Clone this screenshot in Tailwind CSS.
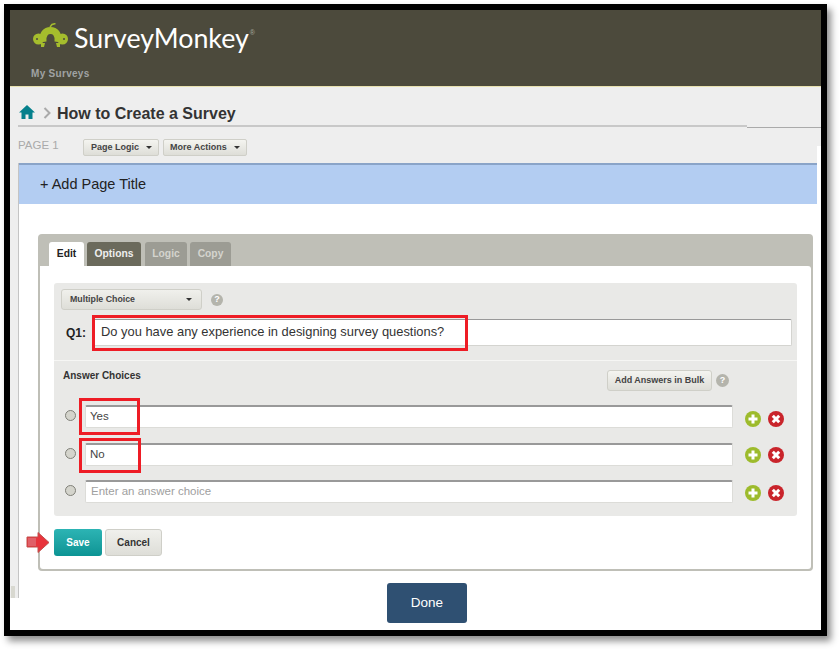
<!DOCTYPE html>
<html><head><meta charset="utf-8"><script src="https://cdn.jsdelivr.net/npm/@tailwindcss/browser@4"></script></head>
<body class="bg-white m-0">
<div class="w-[840px] h-[649px] overflow-hidden relative bg-white font-['Liberation_Sans',sans-serif]">
<div class="absolute left-[4px] top-[4px] w-[823px] h-[632px] border-[6px] border-black bg-white shadow-[4px_5px_7px_rgba(0,0,0,0.45)] flex flex-col">
  <!-- header -->
  <header class="h-[77px] shrink-0 bg-[#4c4a3c] border-b border-[#e8e2b0] pl-[21px] pt-[13px] flex flex-col">
    <div class="flex items-center h-[30px]">
      <svg width="35" height="24" viewBox="0 0 35 24" class="ml-[2px] mr-[6px] mb-[6px]">
        <path d="M17 4 L19 1.5 L22.5 0.5" fill="none" stroke="#a5bd2d" stroke-width="1.5"/>
        <path d="M10 19 C9 11 13 7.5 17.5 7.5 C22 7.5 26 11 25 19" fill="none" stroke="#a5bd2d" stroke-width="7"/>
        <circle cx="5.5" cy="16" r="5.5" fill="#a5bd2d"/><circle cx="29.5" cy="16" r="5.5" fill="#a5bd2d"/>
        <path d="M8 20 L12 20 L11 24 L8 24 Z M23 20 L27 20 L27 24 L24 24 Z" fill="#a5bd2d"/>
        <circle cx="4" cy="16" r="1" fill="#4c4a3c"/><circle cx="31" cy="16" r="1" fill="#4c4a3c"/>
      </svg>
      <span class="text-[26.8px] leading-[30px] text-white font-['Lato',sans-serif]">SurveyMonkey</span>
      <span class="text-[7px] text-[#a8a89c] self-start mt-[5px] ml-[1px]">®</span>
    </div>
    <div class="mt-[14px] text-[10px] leading-[14px] font-bold text-[#a0a3a3] tracking-[0.3px]">My Surveys</div>
  </header>
  <!-- title area -->
  <div class="relative shrink-0 h-[76px] bg-[#eeeeee] pl-[8px]">
    <div class="h-[40px] flex items-end pb-[1px] border-b-2 border-[#c8c8c8] w-[729px]">
      <svg width="16" height="16" viewBox="0 0 16 16" class="ml-[1px] mb-[4px]"><path d="M8 1 L16 8.5 L13.5 8.5 L13.5 15 L9.5 15 L9.5 10.5 L6.5 10.5 L6.5 15 L2.5 15 L2.5 8.5 L0 8.5 Z" fill="#05808c"/></svg>
      <svg width="8" height="12" viewBox="0 0 8 12" class="ml-[8px] mb-[5px]"><path d="M1.5 1 L6.5 6 L1.5 11" fill="none" stroke="#aaaaaa" stroke-width="2"/></svg>
      <h1 class="ml-[6px] text-[16px] leading-[20px] font-bold text-[#333333]">How to Create a Survey</h1>
    </div>
    <div class="absolute left-[737px] top-[40px] w-[74px] h-px bg-[#aaaaaa]"></div>
    <div class="flex items-center h-[36px] pt-[2px]">
      <span class="text-[11.5px] text-[#aaaaaa] w-[65px]">PAGE 1</span>
      <div class="h-[17px] w-[76px] mt-[3px] rounded-[2px] border border-[#cfcfc8] bg-gradient-to-b from-[#f4f4f0] to-[#deded8] flex items-center pl-[7px] text-[9px] font-bold text-[#444444]">Page Logic<span class="ml-[7px] border-x-[3px] border-t-[3px] border-x-transparent border-t-[#333333]"></span></div>
      <div class="h-[17px] w-[84px] mt-[3px] ml-[4px] rounded-[2px] border border-[#cfcfc8] bg-gradient-to-b from-[#f4f4f0] to-[#deded8] flex items-center pl-[6px] text-[9px] font-bold text-[#444444]">More Actions<span class="ml-[7px] border-x-[3px] border-t-[3px] border-x-transparent border-t-[#333333]"></span></div>
    </div>
    <div class="absolute right-0 top-[59px] w-[4px] h-[17px] bg-white"></div>
  </div>
  <!-- lower -->
  <div class="flex flex-1 min-h-0">
    <div class="w-[9px] h-[435px] shrink-0 bg-[#eeeeee] border-r border-[#c4c4c4] relative">
      <div class="absolute left-[1px] bottom-0 w-[4px] h-[12px] bg-[#d8d8d0]"></div>
    </div>
    <div class="flex-1 min-w-0">
      <div class="h-[41px] w-[799px] -ml-px bg-[#b3cdf2] border-t-2 border-[#8aa4c8] pl-[22px] flex items-center text-[14.5px] text-[#222222]">+ Add Page Title</div>
      <!-- card -->
      <section class="ml-[19px] mt-[30px] w-[775px] h-[337px] rounded-[4px] bg-[#bfbfb7] pt-[8px] px-[2px] pb-[2px] flex flex-col">
        <div class="flex h-[24px] pl-[9px] shrink-0 text-[10.3px] font-bold">
          <div class="w-[35px] pb-[1px] bg-white rounded-t-[3px] flex items-center justify-center text-[#222222]">Edit</div>
          <div class="ml-[3px] w-[54px] pb-[1px] bg-[#6b6a5c] rounded-t-[3px] flex items-center justify-center text-[#eeeeee]">Options</div>
          <div class="ml-[4px] w-[42px] pb-[1px] bg-[#9c9c94] rounded-t-[3px] flex items-center justify-center text-[#d4d4ce]">Logic</div>
          <div class="ml-[3px] w-[41px] pb-[1px] bg-[#9c9c94] rounded-t-[3px] flex items-center justify-center text-[#d4d4ce]">Copy</div>
        </div>
        <div class="flex-1 bg-white rounded-b-[3px] rounded-tr-[3px] px-[14px] pt-[17px]">
          <div class="w-[743px] h-[233px] rounded-[3px] bg-[#e9e9e7] flex flex-col">
            <div class="h-[78px] border-b border-[#f6f6f4] shrink-0 pl-[7px] pt-[6px]">
              <div class="flex items-center">
                <div class="h-[21px] w-[141px] rounded-[3px] border border-[#cfcfc8] bg-gradient-to-b from-[#f0f0ec] to-[#deded8] flex items-center justify-between px-[8px] text-[8.8px] font-bold text-[#444444]">Multiple Choice<span class="mr-[1px] border-x-[3px] border-t-[3px] border-x-transparent border-t-[#333333]"></span></div>
                <span class="ml-[9px] w-[12px] h-[12px] rounded-full bg-[#b4b4ac] text-white text-[9px] font-bold flex items-center justify-center">?</span>
              </div>
              <div class="flex items-center mt-[9px]">
                <label class="w-[31px] pl-[5px] text-[12px] font-bold text-[#222222]">Q1:</label>
                <div class="h-[27px] w-[700px] pb-[2px] bg-white border border-[#d4d4d0] border-t-[#999999] rounded-[2px] flex items-center pl-[8px] text-[12.9px] text-[#333333]">Do you have any experience in designing survey questions?</div>
              </div>
            </div>
            <div class="flex items-start justify-between pl-[9px] pr-[68px] pt-[9px] h-[43px] shrink-0">
              <span class="text-[10px] leading-[12px] font-bold text-[#333333]">Answer Choices</span>
              <div class="flex items-center">
                <div class="h-[21px] w-[105px] rounded-[3px] border border-[#cfcfc8] bg-gradient-to-b from-[#f4f4f0] to-[#deded8] flex items-center justify-center text-[9px] font-bold text-[#444444]">Add Answers in Bulk</div>
                <span class="ml-[4px] w-[13px] h-[13px] rounded-full bg-[#b4b4ac] text-white text-[9px] font-bold flex items-center justify-center">?</span>
              </div>
            </div>
            <div class="flex flex-col gap-[14px] pl-[11px] mt-[1px]">
              <div class="flex items-center h-[23px]">
                <span class="w-[11px] h-[11px] rounded-full border border-[#808078] bg-[#d4d4cc] mr-[9px] -mt-[2px]"></span>
                <div class="w-[648px] h-[23px] bg-white border border-[#dcdcd8] border-t-2 border-t-[#999999] rounded-[2px] flex items-center pl-[4px] text-[11.5px] text-[#444444]">Yes</div>
                <span class="ml-[12px] mt-[5px]"><svg width="16" height="16" viewBox="0 0 16 16"><circle cx="8" cy="8" r="8" fill="#9dbb2c"/><path d="M8 3.5v9M3.5 8h9" stroke="#fff" stroke-width="3"/></svg></span>
                <span class="ml-[7px] mt-[5px]"><svg width="16" height="16" viewBox="0 0 16 16"><circle cx="8" cy="8" r="8" fill="#c9242b"/><path d="M4.8 4.8l6.4 6.4M11.2 4.8l-6.4 6.4" stroke="#fff" stroke-width="3"/></svg></span>
              </div>
              <div class="flex items-center h-[23px] mt-[1px]">
                <span class="w-[11px] h-[11px] rounded-full border border-[#808078] bg-[#d4d4cc] mr-[9px] -mt-[2px]"></span>
                <div class="w-[648px] h-[23px] bg-white border border-[#dcdcd8] border-t-2 border-t-[#999999] rounded-[2px] flex items-center pl-[4px] text-[11.5px] text-[#444444]">No</div>
                <span class="ml-[12px] mt-[1px]"><svg width="16" height="16" viewBox="0 0 16 16"><circle cx="8" cy="8" r="8" fill="#9dbb2c"/><path d="M8 3.5v9M3.5 8h9" stroke="#fff" stroke-width="3"/></svg></span>
                <span class="ml-[7px] mt-[1px]"><svg width="16" height="16" viewBox="0 0 16 16"><circle cx="8" cy="8" r="8" fill="#c9242b"/><path d="M4.8 4.8l6.4 6.4M11.2 4.8l-6.4 6.4" stroke="#fff" stroke-width="3"/></svg></span>
              </div>
              <div class="flex items-center h-[23px]">
                <span class="w-[11px] h-[11px] rounded-full border border-[#808078] bg-[#d4d4cc] mr-[9px] -mt-[2px]"></span>
                <div class="w-[648px] h-[23px] bg-white border border-[#dcdcd8] border-t-2 border-t-[#999999] rounded-[2px] flex items-center pl-[5px] text-[11.5px] text-[#a0a0a0]">Enter an answer choice</div>
                <span class="ml-[12px] mt-[3px]"><svg width="16" height="16" viewBox="0 0 16 16"><circle cx="8" cy="8" r="8" fill="#9dbb2c"/><path d="M8 3.5v9M3.5 8h9" stroke="#fff" stroke-width="3"/></svg></span>
                <span class="ml-[7px] mt-[3px]"><svg width="16" height="16" viewBox="0 0 16 16"><circle cx="8" cy="8" r="8" fill="#c9242b"/><path d="M4.8 4.8l6.4 6.4M11.2 4.8l-6.4 6.4" stroke="#fff" stroke-width="3"/></svg></span>
              </div>
            </div>
          </div>
          <div class="flex gap-[3px] mt-[13px]">
            <button class="w-[48px] h-[27px] rounded-[3px] bg-gradient-to-b from-[#2cb4b4] to-[#0b9494] text-white text-[10px] font-bold">Save</button>
            <button class="w-[57px] h-[27px] rounded-[3px] border border-[#cfcfc8] bg-gradient-to-b from-[#f0f0ec] to-[#deded8] text-[#333333] text-[10px] font-bold">Cancel</button>
          </div>
        </div>
      </section>
      <div class="ml-[368px] mt-[12px] w-[80px] h-[40px] rounded-[3px] bg-[#2f5072] text-white text-[13.5px] flex items-center justify-center">Done</div>
    </div>
  </div>
  <!-- annotations -->
  <div class="absolute left-[82px] top-[305px] w-[376px] h-[36px] border-[3px] border-[#ee1c25]"></div>
  <div class="absolute left-[69px] top-[388px] w-[61px] h-[37px] border-[3px] border-[#ee1c25]"></div>
  <div class="absolute left-[69px] top-[428px] w-[62px] h-[35px] border-[3px] border-[#ee1c25]"></div>
  <svg class="absolute left-[16px] top-[522px]" width="24" height="21" viewBox="0 0 24 21"><path d="M1 5 H12 V0.5 L23 10.5 L12 20.5 V15 H1 Z" fill="#e8343c" stroke="#c0504d" stroke-width="1"/><path d="M2 6 H10 V14 H2 Z" fill="#e06068"/></svg>
</div>
</div>
</body></html>
